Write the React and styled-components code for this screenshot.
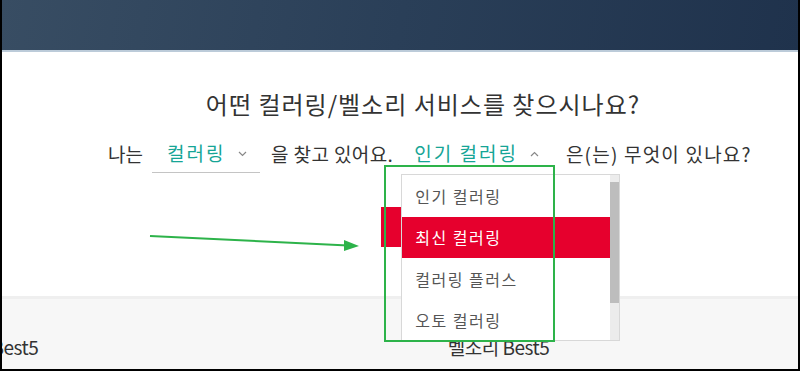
import React from 'react'
import styled, { createGlobalStyle } from 'styled-components';

const GlobalStyle = createGlobalStyle`
  html, body {
    margin: 0;
    padding: 0;
  }
  body {
    font-family: "Noto Sans CJK KR", "Noto Sans", sans-serif;
    color: #333;
  }
`;

const typeOptions = ['인기 컬러링', '최신 컬러링', '컬러링 플러스', '오토 컬러링', '무료 컬러링'];

const ChevronDown = () => (
  <svg width="9" height="6" viewBox="0 0 9 6">
    <path d="M1 1l3.5 3.5L8 1" fill="none" stroke="#888" strokeWidth="1.2" />
  </svg>
);

const ChevronUp = () => (
  <svg width="9" height="6" viewBox="0 0 9 6">
    <path d="M1 5l3.5-3.5L8 5" fill="none" stroke="#888" strokeWidth="1.2" />
  </svg>
);

const App = () => {
  return (
    <>
      <GlobalStyle />
      <Frame>
        <Header />

        <Question>
          <Title>어떤 컬러링/벨소리 서비스를 찾으시나요?</Title>
          <Sentence>
            <Word $ls={0}>나는</Word>
            <Select $underline $gap={9} $width={108}>
              <span>컬러링</span>
              <ChevronDown />
            </Select>
            <Word $gap={11} $ls={0.4}>을 찾고 있어요.</Word>
            <SelectWrap>
              <Select $gap={6}>
                <span>인기 컬러링</span>
                <ChevronUp />
              </Select>
              <Dropdown>
                <OptionList>
                  {typeOptions.map((opt, i) => (
                    <Option key={opt} $active={i === 1}>{opt}</Option>
                  ))}
                </OptionList>
                <ScrollTrack>
                  <ScrollThumb />
                </ScrollTrack>
              </Dropdown>
            </SelectWrap>
            <Word $gap={14} $ls={1.2}>은(는) 무엇이 있나요?</Word>
          </Sentence>
          <SearchButton>검색</SearchButton>
        </Question>

        <Ranking>
          <Tab>컬러링 Best5</Tab>
          <Tab>벨소리 Best5</Tab>
        </Ranking>

        {/* annotation overlay */}
        <Highlight />
        <Arrow width="230" height="30" viewBox="0 0 230 30">
          <line x1="2" y1="3" x2="200" y2="12.5" stroke="#2db34a" strokeWidth="2" />
          <polygon points="196,7 211,13 196,18" fill="#2db34a" />
        </Arrow>
      </Frame>
    </>
  )
}

const Frame = styled.div`
  position: relative;
  width: 800px;
  height: 371px;
  box-sizing: border-box;
  border: 2px solid #000;
  border-top: 0;
  overflow: hidden;
  background: #fff;
  display: flex;
  flex-direction: column;
`;

const Header = styled.div`
  flex: none;
  height: 50px;
  margin: 0 -2px;
  background: linear-gradient(100deg, #384d63 0%, #2a3f58 50%, #1f324c 100%);
  border-bottom: 2px solid #bccbd9;
`;

const Question = styled.section`
  flex: none;
  height: 244px;
  box-sizing: border-box;
  padding-top: 36px;
`;

const Title = styled.h1`
  margin: 0;
  padding-left: 46px;
  text-align: center;
  font-size: 24px;
  font-weight: 400;
  line-height: 32px;
  color: #333;
  letter-spacing: 1px;
`;

const Sentence = styled.div`
  display: flex;
  align-items: stretch;
  height: 40px;
  margin-top: 13px;
  padding-left: 106px;
  font-size: 19px;
`;

const Word = styled.span`
  display: flex;
  align-items: center;
  margin-left: ${p => p.$gap || 0}px;
  letter-spacing: ${p => p.$ls ?? 1}px;
  color: #333;
  white-space: nowrap;
`;

const SelectWrap = styled.div`
  position: relative;
  display: flex;
`;

const Select = styled.div`
  display: flex;
  align-items: center;
  justify-content: space-between;
  gap: 12px;
  ${p => p.$width && `width: ${p.$width}px;`}
  margin-left: ${p => p.$gap ?? 12}px;
  padding: 0 13px 0 15px;
  color: #16a596;
  letter-spacing: 2px;
  white-space: nowrap;
  box-sizing: border-box;
  border-bottom: 1px solid ${p => p.$underline ? '#c4c4c4' : 'transparent'};

  svg {
    margin-top: 2px;
  }
`;

const Dropdown = styled.div`
  position: absolute;
  top: 41px;
  left: 8px;
  z-index: 5;
  display: flex;
  width: 219px;
  height: 167px;
  box-sizing: border-box;
  border: 1px solid #d8d8d8;
  background: #fff;
`;

const OptionList = styled.ul`
  flex: 1;
  margin: 0;
  padding: 0;
  list-style: none;
  overflow: hidden;
`;

const Option = styled.li`
  display: flex;
  align-items: center;
  height: 41.5px;
  padding-left: 13px;
  font-size: 16px;
  letter-spacing: 1.5px;
  color: ${p => p.$active ? '#fff' : '#555'};
  background: ${p => p.$active ? '#e6002d' : '#fff'};
`;

const ScrollTrack = styled.div`
  flex: none;
  width: 9px;
  padding: 7px 0;
  box-sizing: border-box;
  background: #ececec;
`;

const ScrollThumb = styled.div`
  height: 121px;
  background: #bdbdbd;
`;

const SearchButton = styled.button`
  display: block;
  width: 120px;
  height: 40px;
  margin: 34px 0 0 379px;
  border: 0;
  background: #e6002d;
  color: #fff;
  font-family: inherit;
  font-size: 16px;
`;

const Ranking = styled.div`
  flex: 1;
  display: flex;
  margin-left: -270px;
  background: #f7f7f7;
  border-top: 3px solid #efefef;
`;

const Tab = styled.div`
  flex: none;
  width: 511px;
  padding-top: 36px;
  text-align: center;
  font-size: 19px;
  line-height: 24px;
  color: #333;
  letter-spacing: -0.5px;
`;

const Highlight = styled.div`
  position: absolute;
  left: 382px;
  top: 165px;
  width: 171px;
  height: 177px;
  box-sizing: border-box;
  border: 2px solid #2db34a;
  z-index: 10;
  pointer-events: none;
`;

const Arrow = styled.svg`
  position: absolute;
  left: 146px;
  top: 233px;
  z-index: 10;
  overflow: visible;
`;

export default App
